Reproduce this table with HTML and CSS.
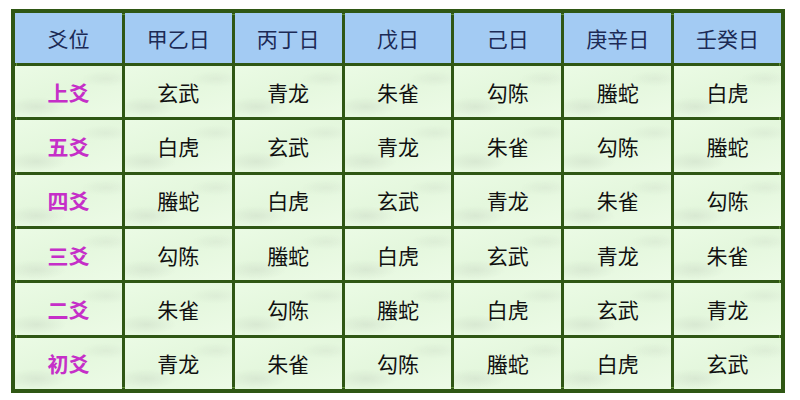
FILE: index.html
```html
<!DOCTYPE html>
<html lang="zh">
<head>
<meta charset="utf-8">
<link rel="stylesheet" href="styles.css">
</head>
<body>
<div class="table">
  <div class="cell head">爻位</div>
  <div class="cell head">甲乙日</div>
  <div class="cell head">丙丁日</div>
  <div class="cell head">戊日</div>
  <div class="cell head">己日</div>
  <div class="cell head">庚辛日</div>
  <div class="cell head">壬癸日</div>

  <div class="cell yao">上爻</div>
  <div class="cell">玄武</div><div class="cell">青龙</div><div class="cell">朱雀</div><div class="cell">勾陈</div><div class="cell">螣蛇</div><div class="cell">白虎</div>

  <div class="cell yao">五爻</div>
  <div class="cell">白虎</div><div class="cell">玄武</div><div class="cell">青龙</div><div class="cell">朱雀</div><div class="cell">勾陈</div><div class="cell">螣蛇</div>

  <div class="cell yao">四爻</div>
  <div class="cell">螣蛇</div><div class="cell">白虎</div><div class="cell">玄武</div><div class="cell">青龙</div><div class="cell">朱雀</div><div class="cell">勾陈</div>

  <div class="cell yao">三爻</div>
  <div class="cell">勾陈</div><div class="cell">螣蛇</div><div class="cell">白虎</div><div class="cell">玄武</div><div class="cell">青龙</div><div class="cell">朱雀</div>

  <div class="cell yao">二爻</div>
  <div class="cell">朱雀</div><div class="cell">勾陈</div><div class="cell">螣蛇</div><div class="cell">白虎</div><div class="cell">玄武</div><div class="cell">青龙</div>

  <div class="cell yao">初爻</div>
  <div class="cell">青龙</div><div class="cell">朱雀</div><div class="cell">勾陈</div><div class="cell">螣蛇</div><div class="cell">白虎</div><div class="cell">玄武</div>
</div>
</body>
</html>
```
FILE: styles.css
```css
html, body {
  margin: 0;
  padding: 0;
  background: #ffffff;
}
body {
  padding: 9px 0 0 11px;
  font-family: "Noto Sans CJK SC", "Noto Sans", sans-serif;
}
.table {
  width: 774px;
  height: 384px;
  box-sizing: border-box;
  display: grid;
  grid-template-columns: repeat(7, 1fr);
  grid-template-rows: 50px repeat(6, 1fr);
  gap: 3px;
  padding: 4px;
  background: #2f5714;
  box-shadow: inset 0 0 0 5px #2f5714, inset 0 0 0 6px #5f8f35;
}
.cell {
  display: flex;
  align-items: center;
  justify-content: center;
  font-size: 21px;
  color: #111111;
  background:
    radial-gradient(ellipse 30px 10px at 20% 80%, rgba(200, 215, 195, 0.45), rgba(200, 215, 195, 0) 100%),
    radial-gradient(ellipse 25px 8px at 85% 25%, rgba(205, 220, 200, 0.35), rgba(205, 220, 200, 0) 100%),
    linear-gradient(160deg, #ebfbe5 0%, #e4f7dd 45%, #edfbe7 100%);
}
.head {
  background: #a3cbf3;
  color: #1c2a55;
  font-size: 21px;
}
.yao {
  color: #c52fc8;
  font-weight: bold;
}
```
